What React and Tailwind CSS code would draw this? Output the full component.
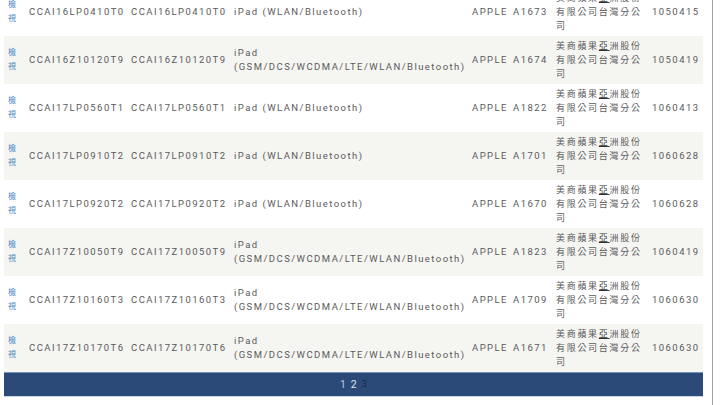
import React from "react";

const GSM = "(GSM/DCS/WCDMA/LTE/WLAN/Bluetooth)";

const rows = [
  { id: "CCAI16LP0410T0", gsm: false, model: "A1673", date: "1050415" },
  { id: "CCAI16Z10120T9", gsm: true, model: "A1674", date: "1050419" },
  { id: "CCAI17LP0560T1", gsm: false, model: "A1822", date: "1060413" },
  { id: "CCAI17LP0910T2", gsm: false, model: "A1701", date: "1060628" },
  { id: "CCAI17LP0920T2", gsm: false, model: "A1670", date: "1060628" },
  { id: "CCAI17Z10050T9", gsm: true, model: "A1823", date: "1060419" },
  { id: "CCAI17Z10160T3", gsm: true, model: "A1709", date: "1060630" },
  { id: "CCAI17Z10170T6", gsm: true, model: "A1671", date: "1060630" },
];

const cell = "pl-[4px] pr-0 align-middle";

export default function App() {
  return (
    <div
      className="flex w-[720px] h-[405px] overflow-hidden bg-white text-[#5a5a5a]"
      style={{ fontFamily: "Roboto, 'Noto Sans CJK TC', sans-serif" }}
    >
      <div className="w-[712px] pl-[4px] pr-[9px]">
        <table className="mt-[-12px] w-[699px] table-fixed border-collapse text-[9.5px] tracking-[1.45px]">
          <colgroup>
            <col className="w-[21px]" />
            <col className="w-[102px]" />
            <col className="w-[103px]" />
            <col className="w-[238px]" />
            <col className="w-[41px]" />
            <col className="w-[43px]" />
            <col className="w-[96px]" />
            <col className="w-[55px]" />
          </colgroup>
          <tbody>
            {rows.map((r, i) => (
              <tr
                key={r.id}
                className={`h-[48px] ${i % 2 === 1 ? "bg-[#f5f5f2]" : "bg-white"}`}
              >
                <td className={cell}>
                  <a className="block w-[9px] text-[8px] leading-[14px] tracking-normal text-[#4a86c5]">
                    檢視
                  </a>
                </td>
                <td className={`${cell} whitespace-nowrap`}>{r.id}</td>
                <td className={`${cell} whitespace-nowrap`}>{r.id}</td>
                <td className={`${cell} whitespace-nowrap leading-[14px]`}>
                  {r.gsm ? (
                    <>
                      iPad
                      <br />
                      {GSM}
                    </>
                  ) : (
                    "iPad (WLAN/Bluetooth)"
                  )}
                </td>
                <td className={`${cell} whitespace-nowrap`}>APPLE</td>
                <td className={`${cell} whitespace-nowrap`}>{r.model}</td>
                <td className={`${cell} text-[9px] leading-[14px] tracking-[1.7px]`}>
                  美商蘋果<span className="underline text-[#333333]">亞</span>洲股份有限公司台灣分公司
                </td>
                <td className={`${cell} whitespace-nowrap`}>{r.date}</td>
              </tr>
            ))}
          </tbody>
        </table>
        <div className="flex h-[25px] items-center justify-center gap-[5px] border-t border-b border-t-[#7893bd] border-b-[#c8d6ea] bg-[#2b4a78] text-[10.5px]">
          <span className="text-[#b7c9e4]">1</span>
          <span className="text-[#dfe7f3]">2</span>
          <span className="text-[9.5px] text-[#14284a]">3</span>
        </div>
      </div>
      <div className="h-full w-px bg-[#a0a0a0]" />
      <div className="flex-1 bg-white" />
    </div>
  );
}
